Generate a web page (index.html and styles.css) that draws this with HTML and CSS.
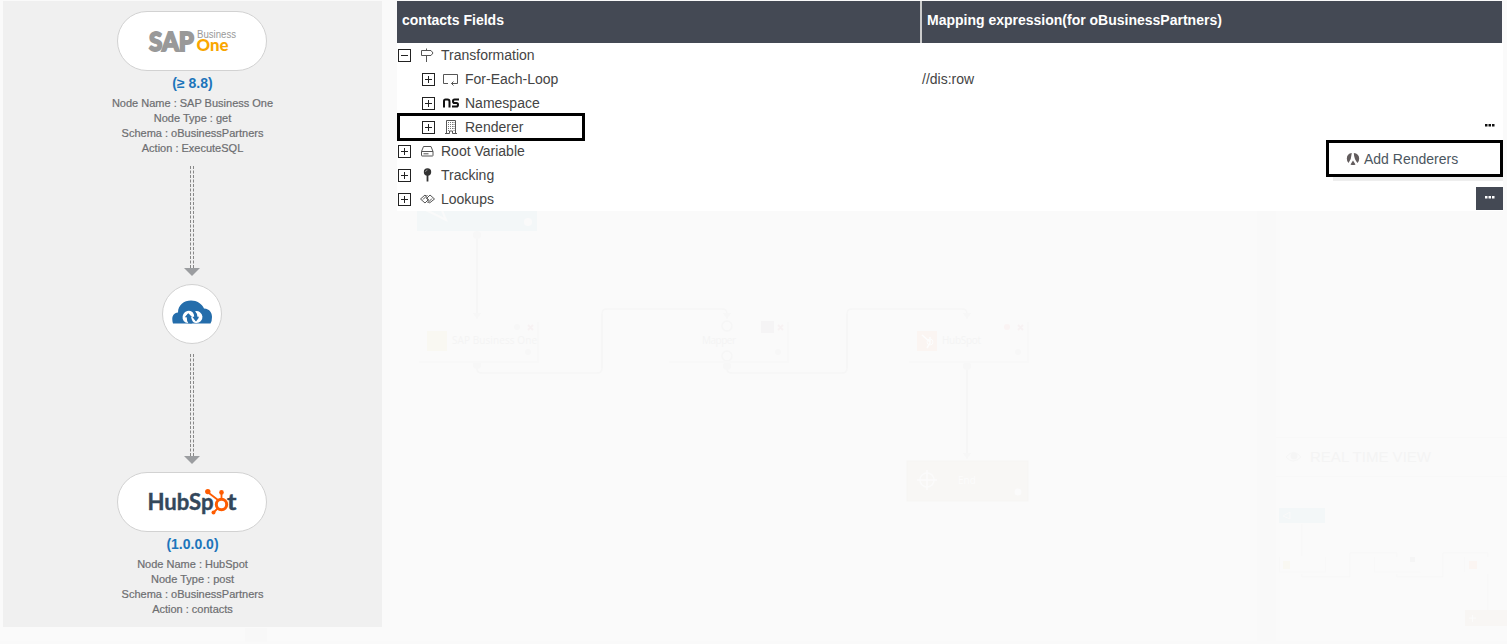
FILE: index.html
```
<!DOCTYPE html>
<html lang="en">
<head>
<meta charset="utf-8">
<title>Mapping</title>
<link rel="stylesheet" href="styles.css">
</head>
<body>
<svg class="backdrop" width="1507" height="644" viewBox="0 0 1507 644">
  <rect x="1257" y="211" width="19" height="433" fill="#f9f9f9"/>
  <rect x="0" y="641" width="1507" height="3" fill="#f9f9f9"/>
  <rect x="245" y="628" width="22" height="14" fill="#f8f8f8"/>
  <rect x="417" y="200" width="120" height="31" fill="#f3f7f8"/>
  <path d="M426 210l20 10-5-12" fill="none" stroke="#fafafa" stroke-width="2"/>
  <circle cx="528" cy="222" r="4" fill="#fafafa"/>
  <g fill="none" stroke="#f6f6f6" stroke-width="1.6">
    <path d="M477 236V318M477 365v4q0 4 5 4H597q5 0 5-5V314q0-5 5-5H722q5 0 5 5v4"/>
    <path d="M727 365v4q0 4 5 4H842q5 0 5-5V314q0-5 5-5H962q5 0 5 5v4M967 365V458"/>
    <circle cx="727" cy="326" r="5"/><circle cx="727" cy="356" r="5"/>
  </g>
  <g fill="#f7f7f7">
    <circle cx="477" cy="235" r="4"/><circle cx="477" cy="365" r="4"/><circle cx="727" cy="366" r="4"/><circle cx="967" cy="366" r="4"/>
    <path d="M473 313h8l-4 6zM723 313h8l-4 6zM963 313h8l-4 6zM963 453h8l-4 6z"/>
    <circle cx="528" cy="352" r="3"/><circle cx="778" cy="352" r="3"/><circle cx="1018" cy="352" r="3"/><circle cx="517" cy="327" r="3"/>
  </g>
  <path d="M419 362h119v-40M669 362h119v-40M909 362h119v-40" fill="none" stroke="#f8f8f8" stroke-width="2"/>
  <rect x="427" y="331" width="20" height="20" fill="#f9f8f2"/>
  <rect x="917" y="331" width="20" height="20" fill="#fbf5f2"/>
  <path d="M922 335l8 7m-3 6l3-5v-6" fill="none" stroke="#fdfdfd" stroke-width="1.500"/><circle cx="930" cy="342" r="3" fill="none" stroke="#fdfdfd"/>
  <rect x="761" y="321" width="13" height="12" fill="#f5f4f5"/>
  <circle cx="1007" cy="327" r="3" fill="#faf3f3"/>
  <path d="M528 325l5 5m0-5l-5 5M778 325l5 5m0-5l-5 5M1018 325l5 5m0-5l-5 5" stroke="#f7f2f3" stroke-width="2"/>
  <g class="ghost"><text x="452" y="344" textLength="85">SAP Business One</text><text x="702" y="344" textLength="34">Mapper</text><text x="942" y="344" textLength="39">HubSpot</text></g>
  <rect x="907" y="461" width="121" height="40" fill="#f8f7f5" stroke="#f6f5f3"/>
  <g fill="none" stroke="#fbfbfb" stroke-width="1.500"><circle cx="927" cy="480" r="7"/><path d="M917 480h20M927 470v20"/></g>
  <text class="ghost ghost-light" x="958" y="484">End</text><circle cx="1018" cy="492" r="3.500" fill="#fbfbfb"/>
  <path d="M1276 437.500H1507M1276 476.500H1507" stroke="#f8f8f8"/>
  <path d="M1286 457q8-9 15 0q-8 8-15 0z" fill="none" stroke="#f6f6f6"/><circle cx="1294" cy="456" r="3.500" fill="#f5f5f5"/>
  <text class="ghost ghost-title" x="1310" y="462" textLength="121">REAL TIME VIEW</text>
  <rect x="1279" y="508" width="46" height="15" fill="#f3f7f8"/>
  <path d="M1283 516l7-4v7z" fill="none" stroke="#fafafa"/>
  <path d="M1302 524v32M1302 574v3h48v-24h47v4M1397 574v3h46v-24h45v4M1488 574v36" fill="none" stroke="#f7f7f7"/>
  <path d="M1279.500 557v15h46v-15M1374.500 557v15h46M1464.500 557v15" fill="none" stroke="#f8f8f8"/>
  <rect x="1283" y="561" width="7" height="8" fill="#f9f8f2"/><rect x="1469" y="561" width="8" height="8" fill="#fbf5f2"/><rect x="1410" y="557" width="5" height="5" fill="#f5f5f5"/>
  <rect x="1465" y="610" width="42" height="16" fill="#f8f6f4"/><path d="M1469 618h7m-3.500-3v7" stroke="#fbfbfb"/>
</svg>

<main class="layout">
  <aside class="flow">
    <div class="pill">
      <svg width="100" height="40" viewBox="-4 -7 100 40">
        <defs><linearGradient id="gold" x1="0" y1="0" x2="0" y2="1"><stop offset="0" stop-color="#ffa800"/><stop offset="1" stop-color="#f5a400"/></linearGradient></defs>
        <text class="logo-sap" x="3" y="22.500" textLength="45" lengthAdjust="spacingAndGlyphs">SAP</text>
        <text class="logo-business" x="51" y="9.500" textLength="39" lengthAdjust="spacingAndGlyphs">Business</text>
        <text class="logo-one" x="50.500" y="22.500" textLength="32" lengthAdjust="spacingAndGlyphs" fill="url(#gold)">One</text>
      </svg>
    </div>
    <div class="version">(≥ 8.8)</div>
    <div class="details"><span>Node Name : SAP Business One</span><span>Node Type : get</span><span>Schema : oBusinessPartners</span><span>Action : ExecuteSQL</span></div>
    <svg class="arrow arrow-first" width="16" height="110" viewBox="0 0 16 110"><path d="M6.500 0V102M9.500 0V102" stroke="#888" stroke-dasharray="3 1.500"/><path d="M0 102H16L8 110z" fill="#9b9da0"/></svg>
    <div class="hub">
      <svg width="40" height="24" viewBox="0 0 40 24">
        <path d="M1 23.500C-.5 19 0 13 6 12.500C6 5 12 .5 19 .5C25 .5 30 4 32 8.500C38 9 40 13 40 17Q40 21 38.500 23.500z" fill="#246dab"/>
        <path d="M13.500 22.500A6 6 0 1 1 20 11.800Q21.500 12.800 22 15L22.500 17H20.500L24 21.500L27 17.500H25.500L25 14L23 11.200A6 6 0 1 1 24 23Q21 23 20 20L19 17H20L16.500 13.500L13.500 17H15Q15 21.500 18.500 23.500z" fill="#fff"/>
        <path d="M12.800 17.300L16.200 13.200L19.600 17.300H17.600Q17.600 21 20 23.500H16.500Q14.700 21 14.700 17.300zM22.800 11Q24.700 13.500 24.700 16.800H27L23.800 21L20.500 16.800H22.400Q22.400 13.500 20.500 11z" fill="#246dab"/>
      </svg>
    </div>
    <svg class="arrow arrow-second" width="16" height="110" viewBox="0 0 16 110"><path d="M6.500 0V102M9.500 0V102" stroke="#888" stroke-dasharray="3 1.500"/><path d="M0 102H16L8 110z" fill="#9b9da0"/></svg>
    <div class="pill pill-last">
      <svg width="92" height="30" viewBox="0 0 92 30">
        <text class="logo-hub" x="1.500" y="23.300" textLength="66" lengthAdjust="spacingAndGlyphs">HubSp</text>
        <text class="logo-hub" x="81" y="23.300" textLength="9.500" lengthAdjust="spacingAndGlyphs">t</text>
        <g stroke="#ff5c00" fill="none"><circle cx="75.500" cy="17.500" r="5.200" stroke-width="3"/><path d="M61.500 5L72 13M75.500 6v6M68 25l4-4" stroke-width="1.800"/></g>
        <g fill="#ff5c00"><circle cx="61.800" cy="4.600" r="2.700"/><circle cx="75.500" cy="5.400" r="2.300"/><circle cx="67.500" cy="25.500" r="2"/></g>
      </svg>
    </div>
    <div class="version">(1.0.0.0)</div>
    <div class="details"><span>Node Name : HubSpot</span><span>Node Type : post</span><span>Schema : oBusinessPartners</span><span>Action : contacts</span></div>
  </aside>

  <section class="mapping">
    <header class="head"><div>contacts Fields</div><div>Mapping expression(for oBusinessPartners)</div></header>
    <div class="tree">
      <div class="row"><i class="toggle minus"></i><svg class="icon" viewBox="0 0 16 16"><path d="M2.500 3.500h9.500L14 6l-2 2.500H2.500zM7.500 1.500v2M7.500 8.500v6.500" class="line"/></svg><span>Transformation</span></div>
      <div class="row child"><i class="toggle"></i><svg class="icon" viewBox="0 0 16 16"><path d="M5 12.500H.5v-9h14v9H8.500M10.500 10.500l-2 2 2 2" class="line"/></svg><span>For-Each-Loop</span><span class="expression">//dis:row</span></div>
      <div class="row child"><i class="toggle"></i><svg class="icon" viewBox="0 0 16 16"><path d="M1 12.500V6Q1 4.500 2.500 4.500H4.500Q6.500 4.500 6.500 6.500v6M16 4.500H11.500Q10 4.500 10 6.200Q10 8 11.500 8H13.500Q15 8 15 9.700Q15 11.500 13.500 11.500H9" fill="none" stroke="#111" stroke-width="2"/></svg><span>Namespace</span></div>
      <div class="row child selected"><i class="toggle"></i><svg class="icon" viewBox="0 0 16 16"><path d="M3.500 14V1.500h9V14M2 14.500h4.500V12h3v2.500h4.500" class="line"/><path d="M5.500 3v9M7.500 3v8M9.500 3v8M11 3v9" stroke="#777" stroke-dasharray="1 1"/></svg><span>Renderer</span></div>
      <div class="row"><i class="toggle"></i><svg class="icon" viewBox="0 0 16 16"><path d="M2.500 8.500L4.500 3.500h7.500L14 8.500v4q0 .5-.5.500H3Q2.500 13 2.500 12.500zM2.500 8.500h11.500M4.500 10.800h5" class="line"/></svg><span>Root Variable</span></div>
      <div class="row"><i class="toggle"></i><svg class="icon" viewBox="0 0 16 16"><circle cx="8.500" cy="5" r="3.700" fill="#333"/><path d="M8.500 8v6.500" stroke="#333" stroke-width="1.800"/><path d="M6.500 5q0-2 2-2" fill="none" stroke="#aaa" stroke-width=".7"/></svg><span>Tracking</span></div>
      <div class="row"><i class="toggle"></i><svg class="icon" viewBox="0 0 16 16"><path d="M7.500 5.500L6 4 1.500 8 6 12l3.500-3.500L7 6.500M4 8.500L8.500 4M9 10.500l1.500 1.500L15.500 8 11 4 7.500 7.500 10 9.500M13 7.500L8.500 12" class="line"/></svg><span>Lookups</span></div>
    </div>
    <button class="dots"><svg width="10" height="3"><path d="M0 0h2.500v2.500H0zM3.500 0h2.500v2.500h-2.500zM7 0h2.500v2.500H7z"/></svg></button>
    <div class="menu"><svg width="14" height="14" viewBox="0 0 14 14"><g fill="#625c5d"><path d="M5.800 1Q1 1.500 .8 6.500Q.8 9.500 2.500 11Q5.500 7 5.800 1zM7.800 1Q13 1.500 13.200 6.500Q13.200 9.500 11.500 11Q8 7 7.800 1zM7 8.500L9.500 12.500Q7 13.500 4.500 12.500z"/></g></svg><span>Add Renderers</span></div>
    <button class="dots dots-dark"><svg width="10" height="3"><path d="M0 0h2.500v2.500H0zM3.500 0h2.500v2.500h-2.500zM7 0h2.500v2.500H7z"/></svg></button>
  </section>
</main>
</body>
</html>
```
FILE: styles.css
```
*, *::before, *::after { box-sizing: border-box; }
body { margin: 0; height: 644px; overflow: hidden; background: #fafafa; font-family: "Liberation Sans", Arial, sans-serif; }
.backdrop { position: absolute; left: 0; top: 0; z-index: -1; }
.ghost { font-family: "Open Sans", sans-serif; font-size: 10px; fill: #f4f4f4; }
.ghost-light { fill: #fcfcfc; }
.ghost-title { font-family: "Liberation Sans", sans-serif; font-size: 15px; }
.layout { display: flex; gap: 15px; padding: 1px 0 0 3px; }
.flow { width: 379px; height: 626px; padding: 10px 1px 0 0; display: flex; flex-direction: column; align-items: center; background: #f0f0f0; }
.flow > * { flex-shrink: 0; }
.pill { width: 150px; height: 60px; display: flex; align-items: center; justify-content: center; background: #fff; border: 1px solid #d2d2d2; border-radius: 30px; }
.pill-last { margin-top: 8px; }
.version { margin-top: 2px; padding-left: 1px; line-height: 20px; font-size: 14px; font-weight: bold; color: #1c75bb; }
.details { margin-top: 3px; padding-left: 1px; display: flex; flex-direction: column; align-items: center; font-size: 11px; line-height: 15px; color: #6d6e71; -webkit-text-stroke: .2px #6d6e71; }
.arrow { display: block; margin-top: 10px; }
.hub { width: 60px; height: 60px; margin-top: 8px; padding-bottom: 4px; display: flex; align-items: center; justify-content: center; background: #fff; border: 1px solid #d2d2d2; border-radius: 50%; }
.logo-sap { font: 900 27px Lato, sans-serif; fill: #999; stroke: #999; stroke-width: 1.8px; }
.logo-business { font: 10px "Liberation Sans", sans-serif; fill: #999; }
.logo-one { font: 900 17px Lato, sans-serif; }
.logo-hub { font: 700 22px Lato, sans-serif; fill: #33475b; stroke: #33475b; stroke-width: .4px; }
.mapping { position: relative; width: 1105px; }
.head { height: 42px; display: grid; grid-template-columns: 523px 1fr; background: #444954; color: #fff; font-size: 14px; font-weight: bold; line-height: 38px; }
.head div { padding-left: 5px; }
.head div + div { border-left: 2px solid #ccc; }
.tree { width: 1106px; height: 168px; background: #fff; }
.row { height: 24px; padding-left: 1px; display: flex; align-items: center; font-size: 14px; color: #444; }
.row.child { padding-left: 25px; }
.toggle { position: relative; width: 13px; height: 13px; border: 1px solid #222; }
.toggle::before, .toggle::after { content: ""; position: absolute; background: #222; }
.toggle::before { left: 2px; top: 5px; width: 7px; height: 1px; }
.toggle::after { left: 5px; top: 2px; width: 1px; height: 7px; }
.toggle.minus::after { display: none; }
.icon { width: 16px; height: 16px; margin: 0 6px 0 8px; }
.child .icon { margin: 0 6px 0 8px; }
.row > span { width: 130px; white-space: nowrap; }
.row > .expression { margin-left: 327px; }
.line { fill: none; stroke: #555; stroke-width: 1; }
.selected { position: relative; }
.selected::after { content: ""; position: absolute; left: 0; top: -2px; width: 188px; height: 28px; border: 3px solid #000; }
.dots { position: absolute; left: 1079px; top: 114px; width: 27px; height: 23px; padding: 0 0 2px; display: flex; align-items: center; justify-content: center; border: 0; background: none; fill: #111; }
.dots-dark { top: 186px; background: #444954; fill: #fff; }
.menu { position: absolute; left: 929px; top: 139px; width: 177px; height: 37px; padding-left: 17px; display: flex; align-items: center; gap: 4px; background: #fff; border: 3px solid #000; color: #4b5660; font-size: 14px; }
.menu::after { content: ""; position: absolute; left: 4px; right: -3px; bottom: -7px; height: 4px; background: #eee; }
```
